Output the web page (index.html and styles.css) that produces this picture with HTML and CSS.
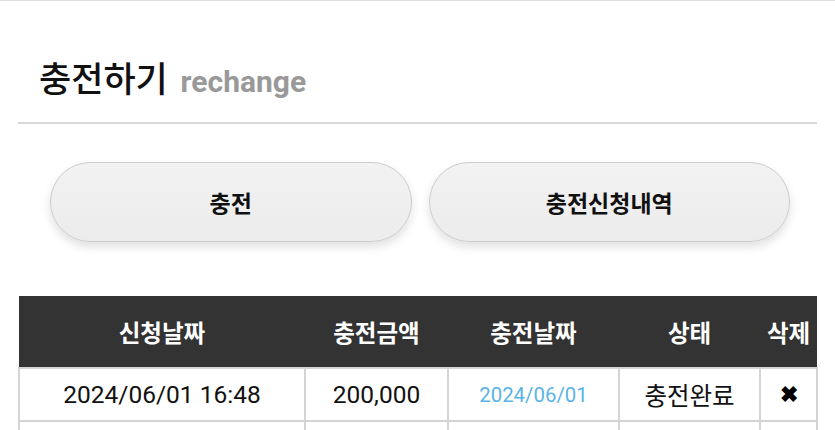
FILE: index.html
```html
<!DOCTYPE html>
<html lang="ko">
<head>
  <meta charset="UTF-8">
  <meta name="viewport" content="width=device-width, initial-scale=1.0">
  <title>충전하기</title>
  <link rel="stylesheet" href="styles.css">
</head>
<body>
  <div class="page">
    <h2 class="title">충전하기 <span class="title-en">rechange</span></h2>

    <div class="tabs">
      <button class="tab-btn">충전</button>
      <button class="tab-btn">충전신청내역</button>
    </div>

    <table class="charge-list">
      <colgroup>
        <col class="c-req">
        <col class="c-amt">
        <col class="c-date">
        <col class="c-state">
        <col class="c-del">
      </colgroup>
      <thead>
        <tr>
          <th>신청날짜</th>
          <th>충전금액</th>
          <th>충전날짜</th>
          <th>상태</th>
          <th>삭제</th>
        </tr>
      </thead>
      <tbody>
        <tr>
          <td>2024/06/01 16:48</td>
          <td>200,000</td>
          <td class="done-date">2024/06/01</td>
          <td>충전완료</td>
          <td class="del">&#10006;</td>
        </tr>
        <!-- next row starts below the fold -->
        <tr>
          <td></td>
          <td></td>
          <td></td>
          <td></td>
          <td></td>
        </tr>
      </tbody>
    </table>
  </div>
</body>
</html>
```

FILE: styles.css
```css
body {
  margin: 0;
  background-color: #ffffff;
  color: #111111;
  font-family: Roboto, "Noto Sans CJK KR", sans-serif;
  border-top: 1px solid #dddddd;
  overflow: hidden;
}
.page {
  padding: 0 18px;
}
.title {
  margin: 0;
  padding: 56px 0 20px 21px;
  font-family: "Noto Sans CJK KR", sans-serif;
  font-size: 35px;
  line-height: 40px;
  font-weight: 500;
  color: #111111;
  border-bottom: 2px solid #d8d8d8;
}
.title-en {
  margin-left: 3px;
  font-family: Roboto, sans-serif;
  font-size: 30px;
  font-weight: 700;
  color: #999999;
}
.tabs {
  display: flex;
  gap: 17px;
  padding: 0 27px 0 32px;
  margin: 38px 0 54px 0;
}
.tab-btn {
  flex: 1;
  height: 80px;
  border: 1px solid #cccccc;
  border-radius: 40px;
  background: linear-gradient(#f2f2f2, #ececec);
  box-shadow: 0 5px 10px rgba(0, 0, 0, 0.12);
  font-family: "Noto Sans CJK KR", sans-serif;
  font-size: 23px;
  font-weight: 700;
  color: #111111;
}
table.charge-list {
  width: 100%;
  border-collapse: collapse;
  table-layout: fixed;
  font-size: 24.5px;
}
.c-req { width: 286px; }
.c-amt { width: 143px; }
.c-date { width: 171px; }
.c-state { width: 141px; }
.c-del { width: 57px; }

table.charge-list th {
  height: 71px;
  padding: 0;
  background-color: #333333;
  color: #ffffff;
  font-family: "Noto Sans CJK KR", sans-serif;
  font-size: 23.5px;
  font-weight: 700;
  text-align: center;
}
table.charge-list td {
  height: 51px;
  padding: 0;
  border: 2px solid #d4d4d4;
  text-align: center;
  vertical-align: middle;
  color: #111111;
}
table.charge-list td.done-date {
  font-size: 20.4px;
  color: #5ab4e6;
}
table.charge-list td.del {
  font-size: 22px;
  font-weight: 700;
  color: #000000;
}
```
